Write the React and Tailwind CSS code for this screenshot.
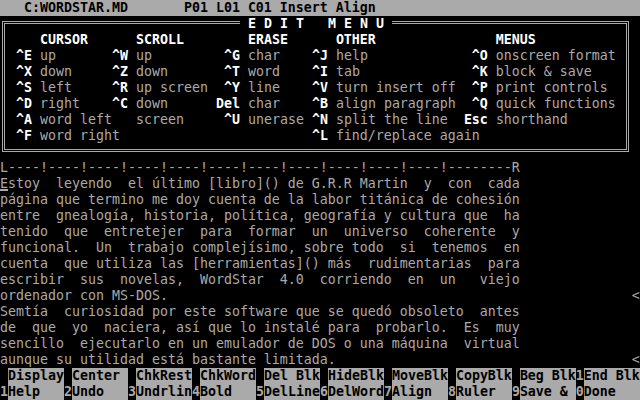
import React from "react";

const H = "text-white font-bold";
const K = "text-white font-bold";
const D = "text-[#aaaaaa]";

function Cells({ segs, base = 0 }) {
  const out = [];
  let col = base;
  segs.forEach(([c, text, cls], i) => {
    if (c > col) out.push(<span key={"s" + i}>{" ".repeat(c - col)}</span>);
    out.push(
      <span key={i} className={cls}>
        {text}
      </span>
    );
    col = c + text.length;
  });
  return out;
}

function k(col, key, desc) {
  return [
    [col, "^", K],
    [col + 1, key, K],
    [col + 3, desc, D],
  ];
}
function kk(col, key, desc) {
  return [
    [col, key, K],
    [col + key.length + 1, desc, D],
  ];
}

const menuRows = [
  [
    [5, "CURSOR", H],
    [17, "SCROLL", H],
    [31, "ERASE", H],
    [42, "OTHER", H],
    [62, "MENUS", H],
  ],
  [...k(2, "E", "up"), ...k(14, "W", "up"), ...k(28, "G", "char"), ...k(39, "J", "help"), ...k(59, "O", "onscreen format")],
  [...k(2, "X", "down"), ...k(14, "Z", "down"), ...k(28, "T", "word"), ...k(39, "I", "tab"), ...k(59, "K", "block & save")],
  [...k(2, "S", "left"), ...k(14, "R", "up screen"), ...k(28, "Y", "line"), ...k(39, "V", "turn insert off"), ...k(59, "P", "print controls")],
  [...k(2, "D", "right"), ...k(14, "C", "down"), ...kk(27, "Del", "char"), ...k(39, "B", "align paragraph"), ...k(59, "Q", "quick functions")],
  [...k(2, "A", "word left"), [17, "screen", D], ...k(28, "U", "unerase"), ...k(39, "N", "split the line"), ...kk(58, "Esc", "shorthand")],
  [...k(2, "F", "word right"), ...k(39, "L", "find/replace again")],
];

const body = [
  "página que termino me doy cuenta de la labor titánica de cohesión",
  "entre  gnealogía, historia, política, geografía y cultura que  ha",
  "tenido  que  entretejer  para  formar  un  universo  coherente  y",
  "funcional.  Un  trabajo complejísimo, sobre todo  si  tenemos  en",
  "cuenta  que utiliza las [herramientas]() más  rudimentarias  para",
  "escribir  sus  novelas,  WordStar  4.0  corriendo  en  un   viejo",
  "ordenador con MS-DOS.",
  "Semtía  curiosidad por este software que se quedó obsoleto  antes",
  "de  que  yo  naciera, así que lo instalé para  probarlo.  Es  muy",
  "sencillo  ejecutarlo en un emulador de DOS o una máquina  virtual",
  "aunque su utilidad está bastante limitada.",
];
const marks = { 6: true, 10: true };

const top = ["Display", "Center", "ChkRest", "ChkWord", "Del Blk", "HideBlk", "MoveBlk", "CopyBlk", "Beg Blk", "End Blk"];
const bot = ["Help", "Undo", "Undrlin", "Bold", "DelLine", "DelWord", "Align", "Ruler", "Save &", "Done"];
const numTop = [" ", " ", " ", " ", " ", " ", " ", " ", " ", "1"];
const numBot = ["1", "2", "3", "4", "5", "6", "7", "8", "9", "0"];

function FnRow({ labels, nums }) {
  return (
    <div className="h-4 whitespace-pre flex">
      {labels.map((l, i) => (
        <React.Fragment key={i}>
          <span className="text-[#aaaaaa] font-bold bg-black">{nums[i]}</span>
          <span className="bg-[#aaaaaa] text-black font-bold">{l.padEnd(7, " ")}</span>
        </React.Fragment>
      ))}
    </div>
  );
}

export default function App() {
  return (
    <div className="w-[640px] h-[400px] bg-black overflow-hidden font-['DejaVu_Sans_Mono','Liberation_Mono',monospace] text-[13.29px] leading-4 text-[#aaaaaa]">
      <div className="h-4 whitespace-pre bg-[#aaaaaa] text-black font-bold">
        {"   C:WORDSTAR.MD       P01 L01 C01 Insert Align"}
      </div>
      <div className="relative ml-[2px] mt-[5px] mb-[8px] w-[627px] border-[3px] border-double border-[#aaaaaa] pt-[8px] pb-[5px] pl-[3px]">
        <div className="absolute top-[-8px] left-[235px] h-4 bg-black whitespace-pre text-white font-bold">
          {" E D I T   M E N U "}
        </div>
        {menuRows.map((r, i) => (
          <div key={i} className="h-4 whitespace-pre overflow-hidden">
            <Cells segs={r} base={1} />
          </div>
        ))}
      </div>
      <div className="h-4 whitespace-pre">{"L----!----!----!----!----!----!----!----!----!----!----!--------R"}</div>
      <div className="h-4 whitespace-pre">
        <span className="relative">
          E<span className="absolute left-0 right-0 top-[13px] h-[2px] bg-[#aaaaaa]" />
        </span>
        {"stoy  leyendo  el último [libro]() de G.R.R Martin  y  con  cada"}
      </div>
      {body.map((t, i) => (
        <div key={i} className="h-4 whitespace-pre">
          {marks[i] ? t.padEnd(79, " ") + "<" : t}
        </div>
      ))}
      <FnRow labels={top} nums={numTop} />
      <FnRow labels={bot} nums={numBot} />
    </div>
  );
}
